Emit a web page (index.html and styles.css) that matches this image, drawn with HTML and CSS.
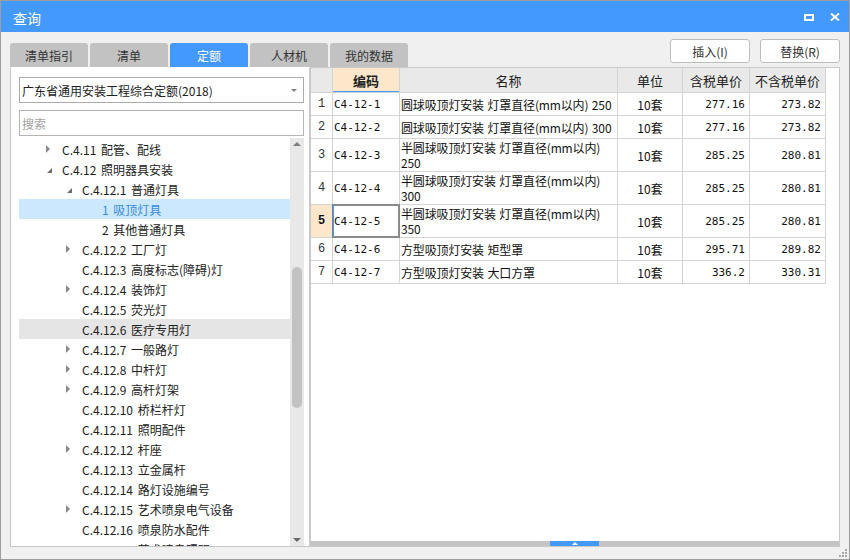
FILE: index.html
```html
<!DOCTYPE html>
<html lang="zh">
<head>
<meta charset="utf-8">
<title>查询</title>
<link rel="stylesheet" href="styles.css">
</head>
<body>
<div class="window">
  <div class="titlebar">
    <span class="title">查询</span>
    <div class="title-btns">
      <svg width="10" height="7" viewBox="0 0 10 7"><rect x="1" y="1" width="8" height="5" fill="none" stroke="#fff" stroke-width="2"/></svg>
      <svg width="10" height="8" viewBox="0 0 10 8"><path d="M1 0.5L9 7.5M9 0.5L1 7.5" stroke="#fff" stroke-width="2" fill="none"/></svg>
    </div>
  </div>
  <div class="toolbar">
    <div class="tabs">
      <div class="tab">清单指引</div>
      <div class="tab">清单</div>
      <div class="tab active">定额</div>
      <div class="tab">人材机</div>
      <div class="tab">我的数据</div>
    </div>
    <div class="actions">
      <button class="btn">插入(I)</button>
      <button class="btn">替换(R)</button>
    </div>
  </div>
  <div class="main">
    <div class="left">
      <div class="select"><span>广东省通用安装工程综合定额(2018)</span><span class="caret"></span></div>
      <div class="search">搜索</div>
      <div class="tree">
        <div class="rows">
          <div class="row l0"><span class="ab"><span class="arw-c"></span></span>C.4.11 配管、配线</div>
          <div class="row l0"><span class="ab"><span class="arw-e"></span></span>C.4.12 照明器具安装</div>
          <div class="row l1"><span class="ab"><span class="arw-e"></span></span>C.4.12.1 普通灯具</div>
          <div class="row l2 selected"><span class="ab"></span>1 吸顶灯具</div>
          <div class="row l2"><span class="ab"></span>2 其他普通灯具</div>
          <div class="row l1"><span class="ab"><span class="arw-c"></span></span>C.4.12.2 工厂灯</div>
          <div class="row l1"><span class="ab"></span>C.4.12.3 高度标志(障碍)灯</div>
          <div class="row l1"><span class="ab"><span class="arw-c"></span></span>C.4.12.4 装饰灯</div>
          <div class="row l1"><span class="ab"></span>C.4.12.5 荧光灯</div>
          <div class="row l1 hover"><span class="ab"></span>C.4.12.6 医疗专用灯</div>
          <div class="row l1"><span class="ab"><span class="arw-c"></span></span>C.4.12.7 一般路灯</div>
          <div class="row l1"><span class="ab"><span class="arw-c"></span></span>C.4.12.8 中杆灯</div>
          <div class="row l1"><span class="ab"><span class="arw-c"></span></span>C.4.12.9 高杆灯架</div>
          <div class="row l1"><span class="ab"></span>C.4.12.10 桥栏杆灯</div>
          <div class="row l1"><span class="ab"></span>C.4.12.11 照明配件</div>
          <div class="row l1"><span class="ab"><span class="arw-c"></span></span>C.4.12.12 杆座</div>
          <div class="row l1"><span class="ab"></span>C.4.12.13 立金属杆</div>
          <div class="row l1"><span class="ab"></span>C.4.12.14 路灯设施编号</div>
          <div class="row l1"><span class="ab"><span class="arw-c"></span></span>C.4.12.15 艺术喷泉电气设备</div>
          <div class="row l1"><span class="ab"></span>C.4.12.16 喷泉防水配件</div>
          <div class="row l1"><span class="ab"></span>C.4.12.17 艺术喷泉照明</div>
        </div>
        <div class="vscroll">
          <span class="arr-up"></span>
          <span class="thumb"></span>
          <span class="arr-down"></span>
        </div>
      </div>
    </div>
    <div class="right">
      <div class="grid">
        <div class="c h"></div>
        <div class="c h sel">编码</div>
        <div class="c h">名称</div>
        <div class="c h">单位</div>
        <div class="c h">含税单价</div>
        <div class="c h">不含税单价</div>

        <div class="c n">1</div>
        <div class="c code">C4-12-1</div>
        <div class="c name">圆球吸顶灯安装 灯罩直径(mm以内) 250</div>
        <div class="c unit">10套</div>
        <div class="c num">277.16</div>
        <div class="c num">273.82</div>

        <div class="c n">2</div>
        <div class="c code">C4-12-2</div>
        <div class="c name">圆球吸顶灯安装 灯罩直径(mm以内) 300</div>
        <div class="c unit">10套</div>
        <div class="c num">277.16</div>
        <div class="c num">273.82</div>

        <div class="c n">3</div>
        <div class="c code">C4-12-3</div>
        <div class="c name">半圆球吸顶灯安装 灯罩直径(mm以内)<br>250</div>
        <div class="c unit">10套</div>
        <div class="c num">285.25</div>
        <div class="c num">280.81</div>

        <div class="c n">4</div>
        <div class="c code">C4-12-4</div>
        <div class="c name">半圆球吸顶灯安装 灯罩直径(mm以内)<br>300</div>
        <div class="c unit">10套</div>
        <div class="c num">285.25</div>
        <div class="c num">280.81</div>

        <div class="c n sel">5</div>
        <div class="c code cur">C4-12-5</div>
        <div class="c name">半圆球吸顶灯安装 灯罩直径(mm以内)<br>350</div>
        <div class="c unit">10套</div>
        <div class="c num">285.25</div>
        <div class="c num">280.81</div>

        <div class="c n">6</div>
        <div class="c code">C4-12-6</div>
        <div class="c name">方型吸顶灯安装 矩型罩</div>
        <div class="c unit">10套</div>
        <div class="c num">295.71</div>
        <div class="c num">289.82</div>

        <div class="c n">7</div>
        <div class="c code">C4-12-7</div>
        <div class="c name">方型吸顶灯安装 大口方罩</div>
        <div class="c unit">10套</div>
        <div class="c num">336.2</div>
        <div class="c num">330.31</div>
      </div>
      <div class="hscroll"><span class="hthumb"><span class="hthumb-arr"></span></span></div>
    </div>
  </div>
  <svg class="grip" width="8" height="8" viewBox="0 0 8 8">
    <rect x="6" y="0" width="2" height="2" fill="#a8a8a8"/>
    <rect x="3" y="3" width="2" height="2" fill="#a8a8a8"/>
    <rect x="6" y="3" width="2" height="2" fill="#a8a8a8"/>
    <rect x="0" y="6" width="2" height="2" fill="#a8a8a8"/>
    <rect x="3" y="6" width="2" height="2" fill="#a8a8a8"/>
    <rect x="6" y="6" width="2" height="2" fill="#a8a8a8"/>
  </svg>
</div>
</body>
</html>
```
FILE: styles.css
```css
* { box-sizing: border-box; margin: 0; padding: 0; }
html, body { width: 850px; height: 560px; overflow: hidden; }
body {
  font-family: "Noto Sans CJK SC", "Noto Sans", sans-serif;
  font-size: 12px;
  color: #222;
  background: #f0f0f0;
}
.window {
  position: relative;
  width: 850px;
  height: 560px;
  border: 1px solid #9d9d9d;
  background: #f0f0f0;
  display: flex;
  flex-direction: column;
}
.titlebar {
  height: 31px;
  flex: none;
  background: #4499ff;
  display: flex;
  align-items: center;
  justify-content: space-between;
  padding: 0 9px 0 12px;
  color: #fff;
}
.title { font-size: 14px; padding-top: 2px; }
.title-btns { display: flex; align-items: center; gap: 16px; padding-top: 1px; }
.title-btns svg { display: block; }

.toolbar {
  height: 35px;
  flex: none;
  display: flex;
  justify-content: space-between;
  padding: 0 9px;
}
.tabs { display: flex; gap: 2px; align-self: flex-end; }
.tab {
  width: 78px;
  height: 24px;
  background: #c2c2c2;
  border-radius: 3px 3px 0 0;
  display: flex;
  align-items: center;
  justify-content: center;
  color: #333;
  font-size: 12px;
}
.tab.active { background: #4499ff; color: #fff; }
.actions { display: flex; gap: 10px; padding-top: 7px; }
.btn {
  width: 80px;
  height: 24px;
  background: #fff;
  border: 1px solid #bdbdbd;
  border-radius: 3px;
  font: 12px "Noto Sans CJK SC", sans-serif;
  color: #333;
}

.main { display: flex; height: 480px; flex: none; padding: 0 9px; }

.left {
  width: 300px;
  border: 1px solid #c9c9c9;
  border-top-color: #fff;
  background: #fff;
  padding: 9px 5px 0 8px;
  display: flex;
  flex-direction: column;
}
.select {
  height: 26px;
  flex: none;
  border: 1px solid #ababab;
  display: flex;
  align-items: center;
  justify-content: space-between;
  padding: 0 6px 0 2px;
  color: #222;
}
.caret {
  width: 0; height: 0;
  border-left: 3px solid transparent;
  border-right: 3px solid transparent;
  border-top: 3px solid #808080;
}
.search {
  height: 26px;
  flex: none;
  margin-top: 7px;
  border: 1px solid #b5b5b5;
  display: flex;
  align-items: center;
  padding-left: 2px;
  color: #a3a3a3;
}
.tree { flex: 1; margin-top: 2px; display: flex; min-height: 0; }
.rows { flex: 1; padding-top: 1px; overflow: hidden; }
.row {
  height: 20px;
  display: flex;
  align-items: center;
  white-space: nowrap;
  color: #222;
  word-spacing: 2px;
}
.row.l0 { padding-left: 27px; }
.row.l1 { padding-left: 47px; }
.row.l2 { padding-left: 67px; }
.row.selected { background: #cce8ff; color: #3a8be0; }
.row.hover { background: #e5e5e5; }
.ab { width: 16px; flex: none; display: flex; align-items: center; height: 20px; }
.arw-c {
  width: 0; height: 0;
  border-left: 4px solid #8a8a8a;
  border-top: 4px solid transparent;
  border-bottom: 4px solid transparent;
}
.arw-e {
  width: 0; height: 0;
  margin-left: 1px;
  margin-top: 2px;
  border-right: 5px solid #6e6e6e;
  border-top: 5px solid transparent;
}
.vscroll {
  width: 14px;
  flex: none;
  background: #e8e8e8;
  display: flex;
  flex-direction: column;
  align-items: center;
}
.arr-up {
  margin-top: 4px;
  width: 0; height: 0;
  border-left: 4px solid transparent;
  border-right: 4px solid transparent;
  border-bottom: 4px solid #7f7f7f;
}
.thumb {
  margin-top: 121px;
  width: 10px;
  height: 141px;
  background: #c2c2c2;
  border-radius: 5px;
}
.arr-down {
  margin-top: auto;
  margin-bottom: 4px;
  width: 0; height: 0;
  border-left: 4px solid transparent;
  border-right: 4px solid transparent;
  border-top: 4px solid #6a6a6a;
}

.right {
  width: 530px;
  border: 1px solid #c9c9c9;
  background: #fff;
  display: flex;
  flex-direction: column;
}
.grid {
  align-self: flex-start;
  display: grid;
  grid-template-columns: 21px 66px 217px 64px 66px 75px;
  grid-template-rows: 24px 22px 22px 32px 32px 32px 22px 22px;
  gap: 1px;
  background: #d4d4d4;
  border-right: 1px solid #d4d4d4;
  border-bottom: 1px solid #d4d4d4;
}
.c {
  background: #fff;
  display: flex;
  align-items: center;
  white-space: nowrap;
  overflow: hidden;
  font-size: 12px;
  color: #111;
}
.c.h {
  background: #e9e9e9;
  justify-content: center;
  font-size: 13px;
  color: #222;
}
.c.h.sel {
  background: #fde7cb;
  font-weight: bold;
  box-shadow: inset 0 -1px 0 #4a9af5;
}
.c.n {
  justify-content: center;
  font-family: "Liberation Mono", monospace;
  font-size: 12px;
  color: #333;
}
.c.n.sel { background: #fde7cb; font-weight: bold; color: #111; }
.c.code {
  padding-left: 1px;
  font-family: "DejaVu Sans Mono", monospace;
  font-size: 11px;
}
.c.code.cur {
  overflow: visible;
  box-shadow: -1px 0 0 0 #3d8ff2, 0 0 0 1px #8a8a8a, inset 0 0 0 1px #8a8a8a;
}
.c.name {
  padding-left: 1px;
  line-height: 15px;
  word-spacing: 1px;
  letter-spacing: -0.15px;
}
.c.unit { justify-content: center; }
.c.num {
  justify-content: flex-end;
  padding-right: 4px;
  font-family: "DejaVu Sans Mono", monospace;
  font-size: 11px;
}
.hscroll {
  margin-top: auto;
  height: 5px;
  flex: none;
  background: #c4c4c4;
  display: flex;
}
.hthumb {
  margin-left: 239px;
  width: 49px;
  height: 5px;
  background: #4499ff;
  display: flex;
  align-items: center;
  justify-content: center;
}
.hthumb-arr {
  width: 0; height: 0;
  border-left: 3px solid transparent;
  border-right: 3px solid transparent;
  border-bottom: 3px solid #fff;
}
.grip { position: absolute; right: 2px; bottom: 2px; display: block; }
```
